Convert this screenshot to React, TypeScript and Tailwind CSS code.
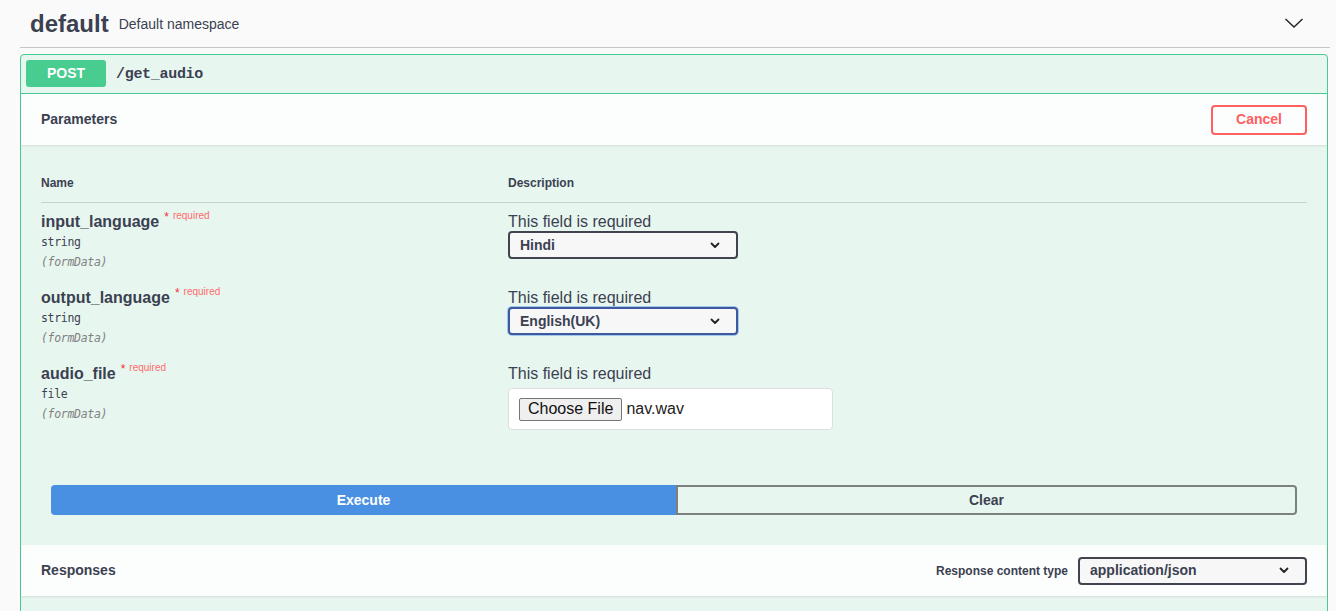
import React from "react";

const Chevron = ({ className = "" }: { className?: string }) => (
  <svg width="10" height="7" viewBox="0 0 10 7" className={className}>
    <path d="M1.5 1.5 L5 5 L8.5 1.5" fill="none" stroke="#222" strokeWidth="1.8" strokeLinecap="round" strokeLinejoin="round" />
  </svg>
);

const Select = ({ value, focused = false, width }: { value: string; focused?: boolean; width: string }) => (
  <div
    className={`${width} h-[28px] flex items-center justify-between pl-[10px] pr-[16px] rounded-[4px] border-2 bg-[#f7f7f7] text-[14px] font-bold text-[#3b4151] ${
      focused ? "border-[#3d5a9e] shadow-[0_0_0_1px_rgba(85,140,230,0.45)]" : "border-[#41444e]"
    }`}
  >
    <span>{value}</span>
    <Chevron />
  </div>
);

const Param = ({ name, type }: { name: string; type: string }) => (
  <div className="w-[467px] shrink-0">
    <div className="flex items-start leading-[18px]">
      <span className="text-[16px] font-bold text-[#3b4151]">{name}</span>
      <span className="ml-[5px] -mt-[2px] text-[12px] leading-[12px] text-[#e33]">*</span>
      <span className="ml-[4px] -mt-[3px] text-[10px] leading-[12px] text-[#ff6b6b]">required</span>
    </div>
    <div className="mt-[3px] text-[11.5px] leading-[16px] font-['DejaVu_Sans_Mono',monospace] text-[#3b4151] tracking-[-0.3px]">{type}</div>
    <div className="mt-[4px] text-[11.5px] leading-[16px] italic font-['DejaVu_Sans_Mono',monospace] text-[#808080] tracking-[-0.3px]">(formData)</div>
  </div>
);

export default function App() {
  return (
    <div className="min-h-[611px] bg-[#fafafa] font-['Liberation_Sans',Arial,sans-serif] text-[#3b4151] pl-[20px] pr-[6px] overflow-hidden">
      {/* Tag header */}
      <div className="h-[48px] flex items-center border-b border-[#c4c5c9] pl-[10px] pr-[26px]">
        <span className="text-[24px] font-bold leading-none">default</span>
        <span className="ml-[10px] text-[14px] text-[#3b4151] mt-[2px]">Default namespace</span>
        <div className="flex-1" />
        <svg width="20" height="14" viewBox="0 0 20 14" className="-mt-[2px]">
          <path d="M1.5 3 L10 11 L18.5 3" fill="none" stroke="#222" strokeWidth="1.4" />
        </svg>
      </div>

      {/* Opblock */}
      <div className="mt-[6px] mr-[2px] border border-[#49cc90] rounded-[4px] bg-[#e8f6f0]">
        {/* summary */}
        <div className="flex items-center pt-[5px] pb-[6px] px-[5px] border-b border-[#49cc90]">
          <div className="w-[80px] h-[27px] rounded-[3px] bg-[#49cc90] text-white text-[14px] font-bold flex items-center justify-center">
            POST
          </div>
          <span className="ml-[10px] mt-[3px] text-[15px] font-bold font-['Liberation_Mono',monospace] text-[#3b4151] tracking-[-0.3px]">
            /get_audio
          </span>
        </div>

        {/* parameters header */}
        <div className="h-[51px] flex items-center justify-between px-[20px] bg-[#fcfdfd] shadow-[0_1px_2px_rgba(0,0,0,0.1)]">
          <span className="text-[14px] font-bold">Parameters</span>
          <button className="w-[96px] h-[30px] rounded-[4px] border-2 border-[#ff6060] text-[#ff6060] text-[14px] font-bold bg-transparent">
            Cancel
          </button>
        </div>

        {/* table */}
        <div className="pt-[22px] px-[20px]">
          <div className="flex pt-[8px] pb-[11px] border-b border-[#c9d3cf] text-[12px] leading-[16px] font-bold">
            <div className="w-[467px]">Name</div>
            <div>Description</div>
          </div>

          <div className="flex h-[76px] pt-[10px]">
            <Param name="input_language" type="string" />
            <div>
              <div className="text-[16px] leading-[18px] text-[#3b4151]">This field is required</div>
              <Select value="Hindi" width="w-[230px]" />
            </div>
          </div>

          <div className="flex h-[76px] pt-[10px]">
            <Param name="output_language" type="string" />
            <div>
              <div className="text-[16px] leading-[18px] text-[#3b4151]">This field is required</div>
              <Select value="English(UK)" focused width="w-[230px]" />
            </div>
          </div>

          <div className="flex h-[76px] pt-[10px]">
            <Param name="audio_file" type="file" />
            <div>
              <div className="text-[16px] leading-[18px] text-[#3b4151]">This field is required</div>
              <div className="mt-[5px] w-[325px] h-[42px] flex items-center pl-[10px] bg-white border border-[#dcdfe0] rounded-[4px]">
                <div className="h-[23px] px-[8px] flex items-center bg-[#efefef] border border-[#767676] rounded-[2px] text-[16px] text-[#111]">
                  Choose File
                </div>
                <span className="ml-[4px] text-[16px] text-[#222]">nav.wav</span>
              </div>
            </div>
          </div>

          {/* execute */}
          <div className="pt-[54px] pb-[30px] px-[10px] flex">
            <button className="w-[625px] shrink-0 h-[30px] bg-[#4990e2] rounded-l-[4px] text-white text-[14px] font-bold">
              Execute
            </button>
            <button className="flex-1 h-[30px] border-2 border-[#7d807f] rounded-r-[4px] bg-transparent text-[#3b4151] text-[14px] font-bold">
              Clear
            </button>
          </div>
        </div>

        {/* responses header */}
        <div className="h-[51px] flex items-center justify-between px-[20px] bg-[#fcfdfd] shadow-[0_1px_2px_rgba(0,0,0,0.1)]">
          <span className="text-[14px] font-bold">Responses</span>
          <div className="flex items-center">
            <span className="text-[12px] font-bold mr-[10px]">Response content type</span>
            <Select value="application/json" width="w-[229px]" />
          </div>
        </div>
        <div className="h-[40px]" />
      </div>
    </div>
  );
}
